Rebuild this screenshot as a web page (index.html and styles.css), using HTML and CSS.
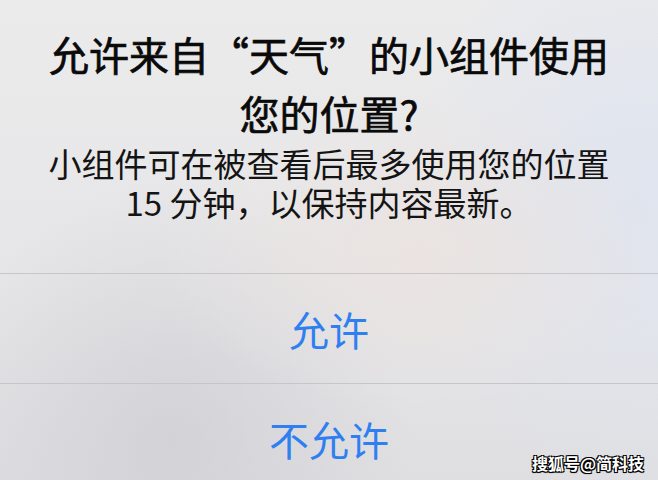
FILE: index.html
```html
<!DOCTYPE html>
<html lang="zh-CN">
<head>
<meta charset="utf-8">
<title>允许来自“天气”的小组件使用您的位置？</title>
<link rel="stylesheet" href="styles.css">
</head>
<body>
<div class="alert">
  <div class="content">
    <h1 class="title"><span class="line">允许来自“天气”的小组件使用</span><span class="line">您的位置?</span></h1>
    <p class="message"><span class="line">小组件可在被查看后最多使用您的位置</span><span class="line">15 分钟，以保持内容最新。</span></p>
  </div>
  <div class="actions">
    <div class="action">允许</div>
    <div class="action">不允许</div>
  </div>
  <div class="watermark">搜狐号@简科技</div>
</div>
</body>
</html>
```
FILE: styles.css
```css
html, body {
  margin: 0;
  padding: 0;
}
body {
  width: 658px;
  height: 480px;
  overflow: hidden;
  font-family: "Noto Sans CJK SC", "Noto Sans", sans-serif;
}
.alert {
  position: relative;
  width: 658px;
  height: 480px;
  display: flex;
  flex-direction: column;
  background:
    radial-gradient(ellipse 260px 160px at 420px 250px, rgba(236, 226, 222, 0.7), rgba(236, 226, 222, 0) 100%),
    radial-gradient(ellipse 240px 260px at 170px 440px, rgba(205, 205, 210, 0.7), rgba(205, 205, 210, 0) 100%),
    radial-gradient(ellipse 220px 300px at 640px 200px, rgba(222, 228, 240, 0.9), rgba(222, 228, 240, 0) 100%),
    linear-gradient(180deg, #ebebec 0%, #e6e6e8 60%, #dfdfe2 100%);
}
.content {
  padding: 25px 20px 51px;
  text-align: center;
}
.line {
  display: block;
}
.title {
  margin: 0;
  font-size: 40px;
  line-height: 59px;
  font-weight: 400;
  color: #0a0a0a;
  -webkit-text-stroke: 0.7px #0a0a0a;
}
.message {
  margin: 1px 0 0;
  font-size: 33px;
  line-height: 39px;
  font-weight: 400;
  color: #141414;
}
.actions {
  display: flex;
  flex-direction: column;
}
.action {
  height: 109px;
  border-top: 1px solid #c6c6ca;
  display: flex;
  align-items: center;
  justify-content: center;
  font-size: 40px;
  color: #2f7ff0;
}
.watermark {
  position: absolute;
  right: 14px;
  bottom: 6px;
  font-size: 16px;
  font-weight: 700;
  line-height: 22px;
  color: #ffffff;
  text-shadow: 1px 1px 0 #000, -1px -1px 0 #000, 1px -1px 0 #000, -1px 1px 0 #000, 0 1px 1px #000;
}
```
